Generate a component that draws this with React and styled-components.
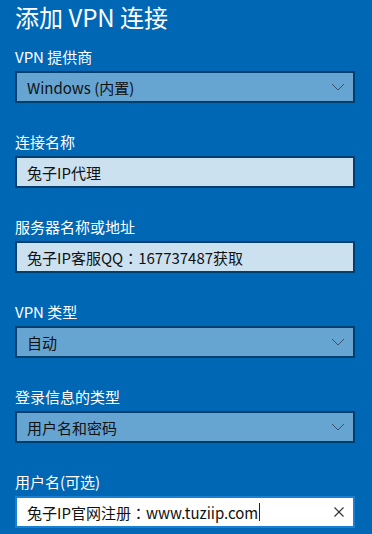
import styled, { createGlobalStyle } from 'styled-components';

const GlobalStyle = createGlobalStyle`
  html, body {
    margin: 0;
    padding: 0;
    background: #0067b4;
    overflow: hidden;
  }
  body {
    font-family: "Noto Sans CJK SC", "Noto Sans", sans-serif;
  }
`;

const Page = styled.div`
  width: 372px;
  height: 534px;
  box-sizing: border-box;
  padding: 0 17px 0 15px;
  background: #0067b4;
  color: #fff;
  display: flex;
  flex-direction: column;
`;

const Title = styled.h1`
  margin: 0 0 13px;
  font-size: 24px;
  font-weight: 400;
  line-height: 34px;
  height: 34px;
  color: #fff;
`;

const FieldList = styled.div`
  display: flex;
  flex-direction: column;
  gap: 29px;
`;

const Field = styled.div`
  display: flex;
  flex-direction: column;
  gap: 4px;
`;

const Label = styled.div`
  font-size: 15px;
  line-height: 20px;
  height: 20px;
  color: #fff;
`;

const Control = styled.div`
  height: 32px;
  box-sizing: border-box;
  border: 2px solid ${p => (p.active ? '#1a80d6' : '#033f6e')};
  background: ${p => (p.variant === 'select' ? '#66a4d2' : p.active ? '#ffffff' : '#cce1f0')};
  display: flex;
  align-items: center;
  padding: 0 8px 0 10px;
  color: #111;
  font-size: 15px;
`;

const Value = styled.span`
  flex: 1;
  white-space: nowrap;
  display: flex;
  align-items: center;
`;

const Colon = styled.span`
  font-family: "Noto Sans CJK TC", "Noto Sans CJK SC", sans-serif;
`;

const Caret = styled.span`
  display: inline-block;
  width: 1px;
  height: 18px;
  background: #222;
  margin-left: 1px;
`;

const Icon = styled.svg`
  flex: none;
`;

const Chevron = () => (
  <Icon width="14" height="8" viewBox="0 0 14 8">
    <path d="M1 1 L7 7 L13 1" fill="none" stroke="#3d5268" strokeWidth="1" />
  </Icon>
);

const ClearIcon = () => (
  <Icon width="12" height="12" viewBox="0 0 12 12">
    <path d="M1.5 1.5 L10.5 10.5 M10.5 1.5 L1.5 10.5" fill="none" stroke="#333" strokeWidth="1.2" />
  </Icon>
);

const renderValue = text =>
  text.split(/(：)/).map((part, i) =>
    part === '：' ? <Colon key={i}>：</Colon> : <span key={i}>{part}</span>
  );

const fields = [
  { label: 'VPN 提供商', value: 'Windows (内置)', variant: 'select' },
  { label: '连接名称', value: '兔子IP代理', variant: 'text' },
  { label: '服务器名称或地址', value: '兔子IP客服QQ：167737487获取', variant: 'text' },
  { label: 'VPN 类型', value: '自动', variant: 'select' },
  { label: '登录信息的类型', value: '用户名和密码', variant: 'select' },
  { label: '用户名(可选)', value: '兔子IP官网注册：www.tuziip.com', variant: 'text', active: true },
];

const App = () => (
  <>
    <GlobalStyle />
    <Page>
      <Title>添加 VPN 连接</Title>
      <FieldList>
        {fields.map(f => (
          <Field key={f.label}>
            <Label>{f.label}</Label>
            <Control variant={f.variant} active={f.active}>
              <Value>
                {renderValue(f.value)}
                {f.active && <Caret />}
              </Value>
              {f.variant === 'select' && <Chevron />}
              {f.active && <ClearIcon />}
            </Control>
          </Field>
        ))}
      </FieldList>
    </Page>
  </>
);

export default App;
